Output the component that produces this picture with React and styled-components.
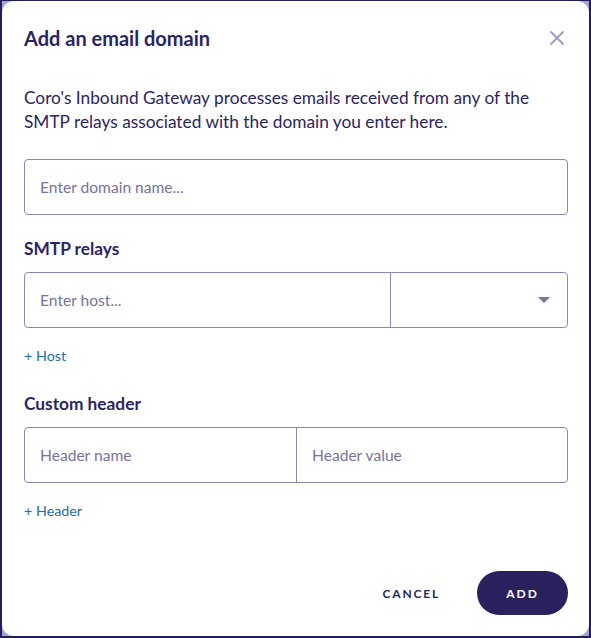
import React from "react";
import styled, { createGlobalStyle } from "styled-components";

const GlobalStyle = createGlobalStyle`
  * { box-sizing: border-box; }
  body {
    margin: 0;
    font-family: Lato, "Noto Sans", sans-serif;
  }
`;

const navy = "#2a2562";
const line = "#8b87b3";
const hint = "#77739c";

const App = () => {
  return (
    <>
      <GlobalStyle />
      <Frame>
        <Dialog>
          <Header>
            <Title>Add an email domain</Title>
            <CloseBtn aria-label="close">
              <svg width="16" height="16" viewBox="0 0 16 16">
                <path
                  d="M2 2 L14 14 M14 2 L2 14"
                  stroke="#9d99c2"
                  strokeWidth="1.8"
                  strokeLinecap="round"
                />
              </svg>
            </CloseBtn>
          </Header>

          <Description>
            Coro's Inbound Gateway processes emails received from any of the
            SMTP relays associated with the domain you enter here.
          </Description>

          <Field>
            <Input placeholder="Enter domain name..." />
          </Field>

          <Label>SMTP relays</Label>
          <Field split="1fr 177px">
            <Input placeholder="Enter host..." />
            <Select>
              <Caret />
            </Select>
          </Field>
          <AddLink>+ Host</AddLink>

          <Label top={25}>Custom header</Label>
          <Field split="1fr 1fr">
            <Input placeholder="Header name" />
            <Input placeholder="Header value" />
          </Field>
          <AddLink>+ Header</AddLink>

          <Actions>
            <TextBtn>CANCEL</TextBtn>
            <PrimaryBtn>ADD</PrimaryBtn>
          </Actions>
        </Dialog>
      </Frame>
    </>
  );
};
export default App;

const Frame = styled.div`
  width: 591px;
  height: 638px;
  border: 2px solid #231e5c;
  border-top-width: 1px;
  background: #a8a4c9;
  display: flex;
`;

const Dialog = styled.div`
  flex: 1;
  background: #fff;
  border-radius: 12px;
  padding: 25px 21px 0 22px;
  display: flex;
  flex-direction: column;
  color: ${navy};
`;

const Header = styled.div`
  display: flex;
  align-items: center;
  justify-content: space-between;
  height: 24px;
`;

const Title = styled.h2`
  margin: 0;
  font-size: 20px;
  font-weight: 700;
  line-height: 24px;
`;

const CloseBtn = styled.button`
  border: 0;
  background: none;
  padding: 0;
  margin-right: 3px;
  display: flex;
  cursor: pointer;
`;

const Description = styled.p`
  margin: 36px 0 25px;
  font-size: 17.3px;
  line-height: 24px;
`;

const Field = styled.div`
  display: grid;
  grid-template-columns: ${(p) => p.split || "1fr"};
  height: 56px;
  border: 1px solid ${line};
  border-radius: 4px;
  overflow: hidden;

  && > * + * {
    border-left: 1px solid ${line};
  }
`;

const Input = styled.input`
  border: 0;
  outline: none;
  min-width: 0;
  padding: 0 15px;
  font-family: inherit;
  font-size: 15.6px;
  color: ${navy};
  background: transparent;

  &::placeholder {
    color: ${hint};
  }
`;

const Select = styled.div`
  display: flex;
  align-items: center;
  justify-content: flex-end;
  padding-right: 17px;
`;

const Caret = styled.span`
  width: 0;
  height: 0;
  border-left: 6px solid transparent;
  border-right: 6px solid transparent;
  border-top: 6px solid #77739c;
`;

const Label = styled.div`
  margin: ${(p) => p.top || 22}px 0 11px;
  font-size: 17.3px;
  font-weight: 700;
  line-height: 24px;
`;

const AddLink = styled.button`
  align-self: flex-start;
  margin-top: 17px;
  border: 0;
  background: none;
  padding: 0;
  font-family: inherit;
  font-size: 14.3px;
  line-height: 22px;
  color: #1b6ca8;
  cursor: pointer;
`;

const Actions = styled.div`
  margin-top: 49px;
  display: flex;
  justify-content: flex-end;
  align-items: center;
  gap: 37px;
`;

const TextBtn = styled.button`
  border: 0;
  background: none;
  padding: 0;
  font-family: inherit;
  font-size: 12px;
  font-weight: 700;
  letter-spacing: 1.8px;
  color: ${navy};
  cursor: pointer;
`;

const PrimaryBtn = styled.button`
  width: 91px;
  height: 44px;
  border: 0;
  border-radius: 22px;
  background: #29225f;
  color: #fff;
  font-family: inherit;
  font-size: 12px;
  font-weight: 700;
  letter-spacing: 2px;
  cursor: pointer;
`;
